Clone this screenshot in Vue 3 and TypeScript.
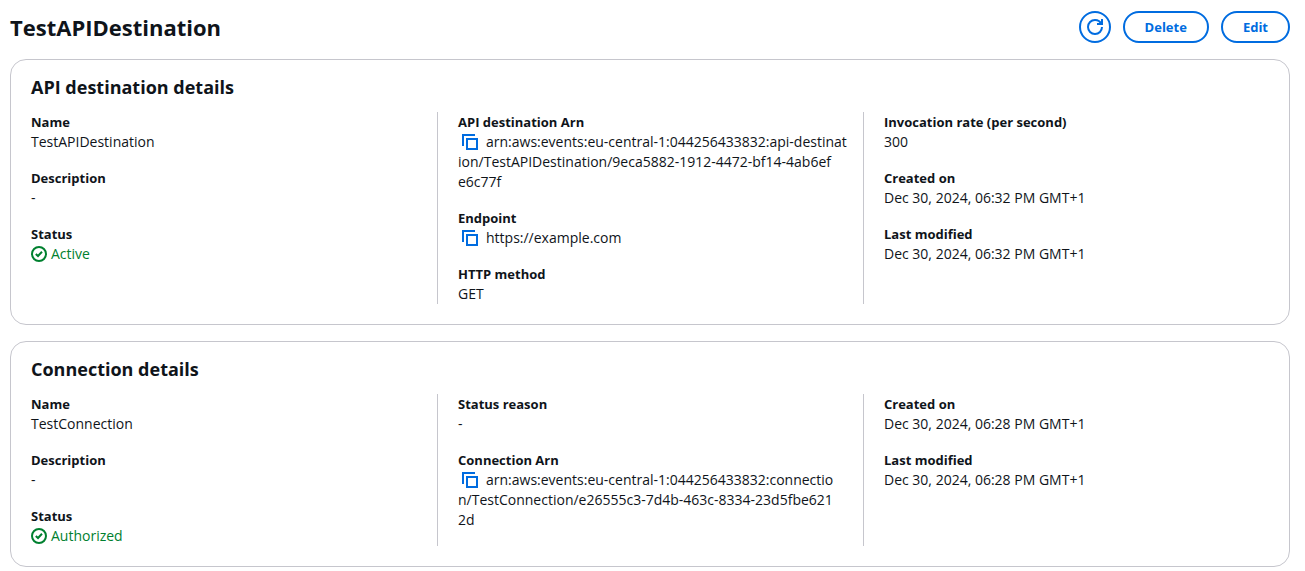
<script setup lang="ts">
type Kind = 'text' | 'copy' | 'status'

interface Field {
  label: string
  value: string
  kind?: Kind
  lines?: string[]
}

interface Panel {
  id: string
  title: string
  columns: Field[][]
}

const name = 'TestAPIDestination'

function copyField(label: string, lines: string[]): Field {
  return { label, value: lines.join(''), lines, kind: 'copy' }
}

const panels: Panel[] = [
  {
    id: 'destination',
    title: 'API destination details',
    columns: [
      [
        { label: 'Name', value: 'TestAPIDestination' },
        { label: 'Description', value: '-' },
        { label: 'Status', value: 'Active', kind: 'status' },
      ],
      [
        copyField('API destination Arn', [
          'arn:aws:events:eu-central-1:044256433832:api-destinat',
          'ion/TestAPIDestination/9eca5882-1912-4472-bf14-4ab6ef',
          'e6c77f',
        ]),
        copyField('Endpoint', ['https://example.com']),
        { label: 'HTTP method', value: 'GET' },
      ],
      [
        { label: 'Invocation rate (per second)', value: '300' },
        { label: 'Created on', value: 'Dec 30, 2024, 06:32 PM GMT+1' },
        { label: 'Last modified', value: 'Dec 30, 2024, 06:32 PM GMT+1' },
      ],
    ],
  },
  {
    id: 'connection',
    title: 'Connection details',
    columns: [
      [
        { label: 'Name', value: 'TestConnection' },
        { label: 'Description', value: '-' },
        { label: 'Status', value: 'Authorized', kind: 'status' },
      ],
      [
        { label: 'Status reason', value: '-' },
        copyField('Connection Arn', [
          'arn:aws:events:eu-central-1:044256433832:connectio',
          'n/TestConnection/e26555c3-7d4b-463c-8334-23d5fbe621',
          '2d',
        ]),
      ],
      [
        { label: 'Created on', value: 'Dec 30, 2024, 06:28 PM GMT+1' },
        { label: 'Last modified', value: 'Dec 30, 2024, 06:28 PM GMT+1' },
      ],
    ],
  },
]

function copy(text: string): void {
  void navigator.clipboard?.writeText(text)
}
</script>

<template>
  <main class="page">
    <header class="header">
      <h1>{{ name }}</h1>
      <div class="actions">
        <button type="button" class="btn round" aria-label="Refresh">
          <svg viewBox="0 0 16 16" width="16" height="16" aria-hidden="true">
            <path d="M10 5h5V0" />
            <path d="M15 8a6.957 6.957 0 0 1-7 7 6.957 6.957 0 0 1-7-7 6.957 6.957 0 0 1 7-7 6.870 6.870 0 0 1 6.300 4" />
          </svg>
        </button>
        <button type="button" class="btn">Delete</button>
        <button type="button" class="btn">Edit</button>
      </div>
    </header>

    <section v-for="panel in panels" :key="panel.id" class="card" :aria-labelledby="panel.id">
      <h2 :id="panel.id">{{ panel.title }}</h2>
      <div class="columns">
        <dl v-for="(column, i) in panel.columns" :key="i" class="column">
          <div v-for="field in column" :key="field.label">
            <dt>{{ field.label }}</dt>
            <dd v-if="field.kind === 'status'" class="status">
              <svg viewBox="0 0 16 16" width="16" height="16" aria-hidden="true">
                <circle cx="8" cy="8" r="7" />
                <path d="m4.800 8 2.200 2 4-4.300" />
              </svg>
              <span>{{ field.value }}</span>
            </dd>
            <dd v-else-if="field.kind === 'copy'" class="arn">
              <button type="button" class="copy" :aria-label="`Copy ${field.label}`" @click="copy(field.value)">
                <svg viewBox="0 0 16 16" width="16" height="16" aria-hidden="true">
                  <path d="M5 5h10v10H5z" />
                  <path d="M13 1H1v11" />
                </svg></button><template v-for="(line, n) in field.lines" :key="n"><br v-if="n > 0" />{{ line }}</template>
            </dd>
            <dd v-else>{{ field.value }}</dd>
          </div>
        </dl>
      </div>
    </section>
  </main>
</template>

<style>
body {
  margin: 0;
  background: #fff;
}
</style>

<style scoped>
.page {
  display: flex;
  flex-direction: column;
  gap: 16px;
  padding: 11px 15px 4px 10px;
  color: #0f141a;
  font: 14px/20px 'Open Sans', 'Noto Sans', sans-serif;
}

.header {
  display: flex;
  align-items: center;
  justify-content: space-between;
}

h1,
h2,
dl,
dd {
  margin: 0;
}

h1 {
  font-size: 22px;
  line-height: 32px;
  font-weight: 700;
}

h2 {
  margin-bottom: 13px;
  font-size: 18px;
  line-height: 24px;
  font-weight: 700;
}

.actions {
  display: flex;
  gap: 12px;
}

.btn {
  height: 32px;
  padding: 0 20px;
  border: 2px solid #006ce0;
  border-radius: 16px;
  background: #fff;
  color: #006ce0;
  font: inherit;
  font-size: 13px;
  font-weight: 700;
  cursor: pointer;
}

.round {
  display: grid;
  place-items: center;
  width: 32px;
  padding: 0;
}

svg {
  display: block;
  fill: none;
  stroke: currentColor;
  stroke-width: 2;
}

.card {
  padding: 15px 20px 20px;
  border: 1px solid #c6c6cd;
  border-radius: 16px;
}

.columns {
  display: grid;
  grid-template-columns: repeat(3, minmax(0, 1fr));
  gap: 40px;
}

.column {
  display: flex;
  flex-direction: column;
  gap: 16px;
}

.column + .column {
  margin-left: -20px;
  padding-left: 20px;
  border-left: 1px solid #c6c6cd;
}

dt {
  font-size: 13px;
  font-weight: 700;
}

.status {
  display: flex;
  align-items: center;
  gap: 4px;
  color: #00802f;
}

.arn {
  white-space: nowrap;
}

.copy {
  display: inline-block;
  height: 16px;
  margin: 0 8px 0 4px;
  padding: 0;
  border: 0;
  background: none;
  color: #006ce0;
  vertical-align: -3px;
  cursor: pointer;
}
</style>
